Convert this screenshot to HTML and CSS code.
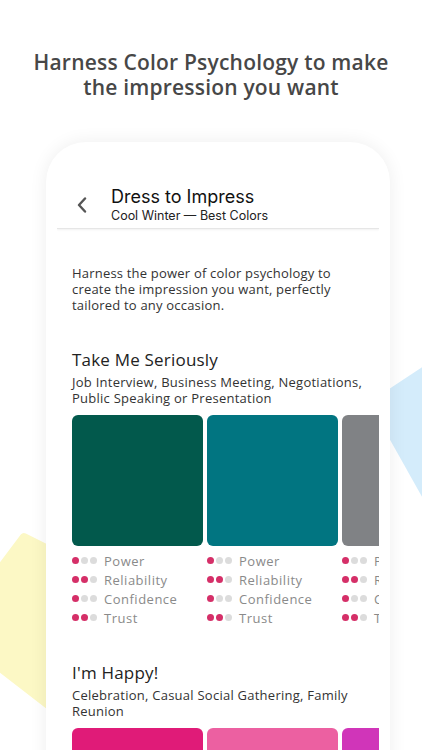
FILE: index.html
```html
<!DOCTYPE html>
<html lang="en">
<head>
  <meta charset="UTF-8" />
  <meta name="viewport" content="width=device-width, initial-scale=1.0"/>
  <title>Dress to Impress</title>
  <link rel="stylesheet" href="styles.css">
</head>
<body>
  <div class="page">
    <svg class="backdrop" width="422" height="750" viewBox="0 0 422 750">
      <polygon class="blob-yellow" points="-10,582 24,537 70,560 60,714 -10,660" />
      <polygon class="blob-blue" points="380,395 430,362 430,511 380,422" />
    </svg>

    <h1 class="headline">Harness Color Psychology to make<br>the impression you want</h1>

    <div class="phone">
      <div class="screen">
        <header class="app-bar">
          <svg class="back" width="10" height="16" viewBox="0 0 10 16">
            <path d="M8 1.5 L2 8 L8 14.5" />
          </svg>
          <div>
            <div class="app-title">Dress to Impress</div>
            <div class="app-sub">Cool Winter — Best Colors</div>
          </div>
        </header>

        <p class="intro">Harness the power of color psychology to create the impression you want, perfectly tailored to any occasion.</p>

        <section class="mood">
          <h2>Take Me Seriously</h2>
          <p class="occasions">Job Interview, Business Meeting, Negotiations, Public Speaking or Presentation</p>
          <div class="swatches">
            <div class="swatch-col">
              <div class="swatch" style="background:#02594c"></div>
              <ul class="traits">
                <li><span class="dots"><i class="on"></i><i></i><i></i></span>Power</li>
                <li><span class="dots"><i class="on"></i><i class="on"></i><i></i></span>Reliability</li>
                <li><span class="dots"><i class="on"></i><i></i><i></i></span>Confidence</li>
                <li><span class="dots"><i class="on"></i><i class="on"></i><i></i></span>Trust</li>
              </ul>
            </div>
            <div class="swatch-col">
              <div class="swatch" style="background:#017581"></div>
              <ul class="traits">
                <li><span class="dots"><i class="on"></i><i></i><i></i></span>Power</li>
                <li><span class="dots"><i class="on"></i><i class="on"></i><i></i></span>Reliability</li>
                <li><span class="dots"><i class="on"></i><i></i><i></i></span>Confidence</li>
                <li><span class="dots"><i class="on"></i><i class="on"></i><i></i></span>Trust</li>
              </ul>
            </div>
            <div class="swatch-col">
              <div class="swatch" style="background:#808285"></div>
              <ul class="traits">
                <li><span class="dots"><i class="on"></i><i></i><i></i></span>Power</li>
                <li><span class="dots"><i class="on"></i><i class="on"></i><i></i></span>Reliability</li>
                <li><span class="dots"><i class="on"></i><i></i><i></i></span>Confidence</li>
                <li><span class="dots"><i class="on"></i><i class="on"></i><i></i></span>Trust</li>
              </ul>
            </div>
          </div>
        </section>

        <section class="mood">
          <h2>I'm Happy!</h2>
          <p class="occasions">Celebration, Casual Social Gathering, Family Reunion</p>
          <div class="swatches">
            <div class="swatch-col"><div class="swatch" style="background:#e01b78"></div></div>
            <div class="swatch-col"><div class="swatch" style="background:#ec60a1"></div></div>
            <div class="swatch-col"><div class="swatch" style="background:#d035b9"></div></div>
          </div>
        </section>
      </div>
    </div>
  </div>
</body>
</html>
```

FILE: styles.css
```css
:root {
  --ink: #222;
  --muted: #8a8a8a;
  --accent: #d52f68;
  --dot-off: #dcdcdc;
}

body {
  margin: 0;
  background: #fff;
  font-family: 'Open Sans', sans-serif;
}

.page {
  position: relative;
  width: 422px;
  height: 750px;
  overflow: hidden;
  padding-top: 50px;
  box-sizing: border-box;
}

.backdrop {
  position: absolute;
  top: 0;
  left: 0;
  z-index: 0;
}

.blob-yellow {
  fill: #fcf8c5;
  stroke: #fcf8c5;
  stroke-width: 8;
  stroke-linejoin: round;
}

.blob-blue {
  fill: #d4ecfb;
}

.headline {
  position: relative;
  margin: 0;
  text-align: center;
  font-size: 21px;
  line-height: 25px;
  font-weight: 600;
  letter-spacing: 0.2px;
  color: #474747;
}

.phone {
  position: relative;
  z-index: 1;
  width: 344px;
  margin: 42px 0 0 46px;
  padding: 11px;
  box-sizing: border-box;
  background: #fff;
  border-radius: 40px 40px 0 0;
  box-shadow: 0 0 18px rgba(0, 0, 0, 0.07);
  height: 700px;
}

.screen {
  overflow: hidden;
  height: 100%;
}

.app-bar {
  display: flex;
  align-items: flex-end;
  height: 76px;
  padding-bottom: 4px;
  box-sizing: border-box;
  border-bottom: 1px solid #e6e6e6;
  box-shadow: 0 1px 2px rgba(0, 0, 0, 0.06);
}

.back {
  fill: none;
  stroke: #555;
  stroke-width: 2.4;
  stroke-linecap: round;
  stroke-linejoin: round;
  margin: 0 24px 11px 20px;
}

.app-title {
  font-family: 'Inter', sans-serif;
  font-size: 18px;
  line-height: 22px;
  color: #111;
}

.app-sub {
  font-family: 'Inter', sans-serif;
  font-size: 12.5px;
  line-height: 16px;
  color: #222;
}

.intro {
  margin: 36px 15px 0;
  font-size: 13px;
  line-height: 16px;
  letter-spacing: 0.2px;
  color: #333;
}

.mood {
  margin-left: 15px;
}

.mood h2 {
  margin: 36px 0 0;
  font-size: 17px;
  line-height: 22px;
  font-weight: 500;
  letter-spacing: 0.2px;
  color: var(--ink);
}

.mood + .mood h2 {
  margin-top: 35px;
}

.occasions {
  margin: 3px 0 0;
  font-size: 13px;
  line-height: 16px;
  letter-spacing: 0.25px;
  color: #333;
}

.swatches {
  display: flex;
  gap: 4px;
  margin-top: 9px;
}

.swatch-col {
  flex: 0 0 131px;
}

.swatch {
  height: 131px;
  border-radius: 6px;
}

.traits {
  list-style: none;
  margin: 5px 0 0;
  padding: 0;
}

.traits li {
  display: flex;
  align-items: center;
  height: 19px;
  font-size: 13px;
  letter-spacing: 0.5px;
  color: var(--muted);
  white-space: nowrap;
}

.dots {
  display: flex;
  gap: 2px;
  margin-right: 7px;
}

.dots i {
  width: 7px;
  height: 7px;
  border-radius: 50%;
  background: var(--dot-off);
}

.dots i.on {
  background: var(--accent);
}
```
